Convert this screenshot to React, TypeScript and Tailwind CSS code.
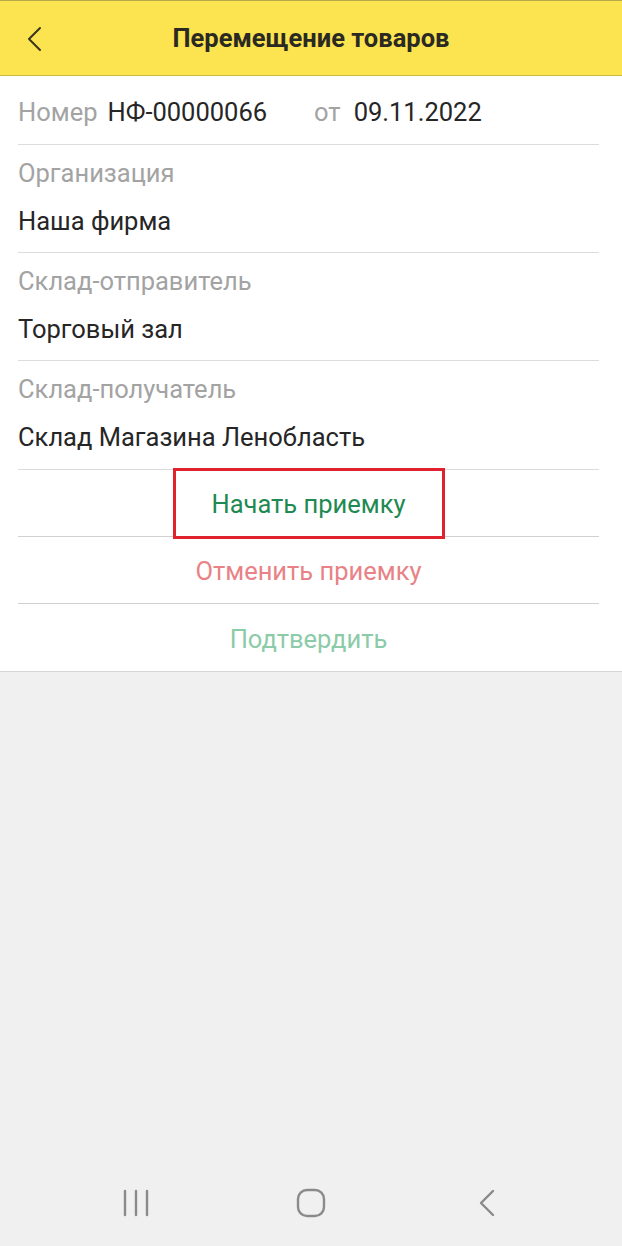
import React from 'react';

const fields = [
  { label: 'Организация', value: 'Наша фирма' },
  { label: 'Склад-отправитель', value: 'Торговый зал' },
  { label: 'Склад-получатель', value: 'Склад Магазина Ленобласть' },
];

const BackIcon = () => (
  <svg width="16" height="26" viewBox="0 0 16 26" fill="none">
    <path d="M14 2 L3 13 L14 24" stroke="#3a3420" strokeWidth="2" strokeLinecap="round" strokeLinejoin="round" />
  </svg>
);

const App = () => {
  return (
    <div className="flex min-h-[1246px] w-full flex-col bg-[#f0f0f0] font-['Roboto',sans-serif]">
      <header className="relative flex h-[76px] items-center justify-center border-t border-b border-t-[#b5a94a] border-b-[#c9ba3e] bg-[#fbe44f]">
        <button className="absolute left-[26px] top-[25px]">
          <BackIcon />
        </button>
        <h1 className="text-[25.5px] font-bold text-[#2b2a22]">Перемещение товаров</h1>
      </header>

      <div className="border-b border-[#d6d6d6] bg-white pl-[18px] pr-[23px]">
        <div className="flex h-[69px] items-center border-b border-[#dcdcdc] pt-[4px] text-[25.5px] leading-[36px]">
          <span className="text-[#a3a3a3]">Номер</span>
          <span className="ml-[10px] text-[#262626]">НФ-00000066</span>
          <span className="ml-[47px] text-[#a3a3a3]">от</span>
          <span className="ml-[13px] text-[#262626]">09.11.2022</span>
        </div>

        {fields.map((item, i) => (
          <div
            key={item.label}
            className={`flex flex-col border-b border-[#dcdcdc] pt-[10px] text-[25.5px] leading-[36px] ${
              i === fields.length - 1 ? 'h-[109px]' : 'h-[108px]'
            }`}
          >
            <span className="text-[#a3a3a3]">{item.label}</span>
            <span className="mt-[12px] text-[#262626]">{item.value}</span>
          </div>
        ))}

        <div className="flex h-[67px] items-center justify-center border-b border-[#d0d0d0] text-[25.5px]">
          <span className="flex h-[71px] w-[272px] items-center justify-center border-[3px] border-[#e0222e] pt-[2px] text-[#1e8a52]">
            Начать приемку
          </span>
        </div>
        <div className="flex h-[67px] items-center justify-center border-b border-[#d0d0d0] pt-[3px] text-[25.5px] text-[#e88286]">
          Отменить приемку
        </div>
        <div className="flex h-[67px] items-center justify-center pt-[3px] text-[25.5px] text-[#8ccba8]">
          Подтвердить
        </div>
      </div>

      <div className="flex-1" />

      <nav className="flex h-[86px] items-center pl-[121px]">
        <svg width="30" height="28" viewBox="0 0 30 28">
          <path d="M4 2 V26 M15 2 V26 M26 2 V26" stroke="#8a8a8a" strokeWidth="2.4" strokeLinecap="round" />
        </svg>
        <svg className="ml-[145px]" width="30" height="30" viewBox="0 0 30 30">
          <rect x="2" y="2" width="26" height="26" rx="9" stroke="#8a8a8a" strokeWidth="2.4" fill="none" />
        </svg>
        <svg className="ml-[152px]" width="18" height="28" viewBox="0 0 18 28">
          <path d="M15 2 L3 14 L15 26" stroke="#8a8a8a" strokeWidth="2.4" strokeLinecap="round" strokeLinejoin="round" fill="none" />
        </svg>
      </nav>
    </div>
  );
};

export default App;
